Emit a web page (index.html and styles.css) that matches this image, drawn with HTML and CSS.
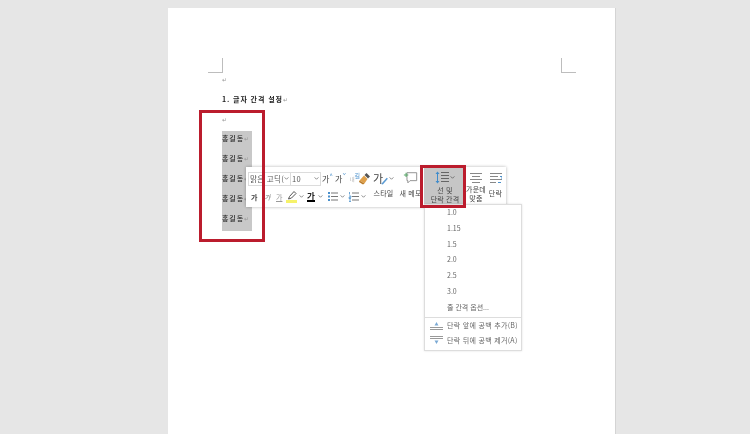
FILE: index.html
```html
<!DOCTYPE html>
<html lang="ko">
<head>
    <meta charset="UTF-8">
    <meta name="viewport" content="width=device-width, initial-scale=1.0">
    <title>줄 간격 설정</title>
    <link rel="stylesheet" href="styles.css">
</head>
<body>
    <div class="page">
        <div class="margin-marks">
            <span class="mark mark-left"></span>
            <span class="mark mark-right"></span>
        </div>

        <div class="doc">
            <p class="line line-empty"><span class="para">↵</span></p>
            <p class="line line-title">1. 글자 간격 설정<span class="para">↵</span></p>
            <p class="line line-empty-2"><span class="para">↵</span></p>
            <div class="selection">
                <p class="name">홍길동<span class="para">↵</span></p>
                <p class="name">홍길동<span class="para">↵</span></p>
                <p class="name">홍길동<span class="para">↵</span></p>
                <p class="name">홍길동<span class="para">↵</span></p>
                <p class="name">홍길동<span class="para">↵</span></p>
            </div>
        </div>

        <!-- mini toolbar -->
        <div class="toolbar">
            <div class="tools">
                <div class="tool-row">
                    <div class="combo combo-font"><span>맑은 고딕(</span>
                        <svg class="chev" width="6" height="4" viewBox="0 0 6 4"><path d="M.5.5 3 3 5.5.5" fill="none" stroke="#666"/></svg>
                    </div>
                    <div class="combo combo-size"><span>10</span>
                        <svg class="chev" width="6" height="4" viewBox="0 0 6 4"><path d="M.5.5 3 3 5.5.5" fill="none" stroke="#666"/></svg>
                    </div>
                    <span class="glyph glyph-grow">가<sup>^</sup></span>
                    <span class="glyph glyph-shrink">가<sup>ˇ</sup></span>
                    <span class="glyph glyph-clear">내<sup>길</sup></span>
                    <svg class="painter" width="13" height="13" viewBox="0 0 13 13">
                        <path d="M8.500 1 12 4.500 10 6.500 6.500 3z" fill="#555"/>
                        <path d="M6 3.500 9.500 7 6.500 11.500 1.500 8.500z" fill="#dfa04a"/>
                        <path d="M1.500 8.500 6.500 11.500 5 12.500 1 10z" fill="#b97a28"/>
                    </svg>
                </div>
                <div class="tool-row tool-row-b">
                    <span class="glyph glyph-bold">가</span>
                    <span class="glyph glyph-italic">가</span>
                    <span class="glyph glyph-under">가</span>
                    <span class="pen">
                        <svg width="13" height="13" viewBox="0 0 13 13">
                            <rect x="1" y="10" width="11" height="3" fill="#f6f26a"/>
                            <path d="M3.500 9 4.500 6.500 9 1.500 11 3.500 6.500 8z" fill="none" stroke="#555"/>
                        </svg>
                        <svg class="chev" width="6" height="4" viewBox="0 0 6 4"><path d="M.5.5 3 3 5.5.5" fill="none" stroke="#666"/></svg>
                    </span>
                    <span class="font-color"><span class="glyph-color">가</span>
                        <svg class="chev" width="6" height="4" viewBox="0 0 6 4"><path d="M.5.5 3 3 5.5.5" fill="none" stroke="#666"/></svg>
                    </span>
                    <span class="list-btn">
                        <svg width="11" height="11" viewBox="0 0 11 11">
                            <path d="M4 2h7M4 5.500h7M4 9h7" stroke="#777"/>
                            <path d="M1 1h2v2H1zM1 4.500h2v2H1zM1 8h2v2H1z" fill="#4a90cc"/>
                        </svg>
                        <svg class="chev" width="6" height="4" viewBox="0 0 6 4"><path d="M.5.5 3 3 5.5.5" fill="none" stroke="#666"/></svg>
                    </span>
                    <span class="list-btn">
                        <svg width="11" height="11" viewBox="0 0 11 11">
                            <path d="M4 2h7M4 5.500h7M4 9h7" stroke="#777"/>
                            <path d="M1.500 1v2.500M1 5h2v1.300H1v1.200h2M1 9h2M1 10.500h2" stroke="#4a90cc" stroke-width=".8" fill="none"/>
                        </svg>
                        <svg class="chev" width="6" height="4" viewBox="0 0 6 4"><path d="M.5.5 3 3 5.5.5" fill="none" stroke="#666"/></svg>
                    </span>
                </div>
            </div>

            <div class="big-btn big-style">
                <span class="big-icon"><span class="style-ga">가</span>
                    <svg class="style-brush" width="9" height="9" viewBox="0 0 8 8"><path d="M1 7 6 1.500 7 2.500 2.500 7.500z" fill="#5a9bd4"/></svg>
                    <svg class="chev" width="6" height="4" viewBox="0 0 6 4"><path d="M.5.5 3 3 5.5.5" fill="none" stroke="#666"/></svg>
                </span>
                <span class="big-label">스타일</span>
            </div>
            <div class="big-btn big-memo">
                <span class="big-icon">
                    <svg width="15" height="14" viewBox="0 0 17 15">
                        <path d="M4.500 1.500h11v9H8L5.500 13v-2.500h-1z" fill="#fff" stroke="#888"/>
                        <path d="M1 4h5M3.500 1.500v5" stroke="#5aa86a" stroke-width="1.200"/>
                    </svg>
                </span>
                <span class="big-label">새 메모</span>
            </div>
            <div class="big-btn big-spacing">
                <span class="big-icon">
                    <svg width="14" height="15" viewBox="0 0 14 15">
                        <path d="M2.500 3v9" stroke="#3f8ccc"/>
                        <path d="M.5 4 2.500 1.500 4.500 4zM.5 11 2.500 13.500 4.500 11z" fill="#3f8ccc"/>
                        <path d="M6 2.500h8M6 5.500h8M6 8.500h8M6 11.500h8" stroke="#666"/>
                    </svg>
                    <svg class="chev" width="6" height="4" viewBox="0 0 6 4"><path d="M.5.5 3 3 5.500.5" fill="none" stroke="#555"/></svg>
                </span>
                <span class="big-label">선 및<br>단락 간격</span>
            </div>
            <div class="big-btn big-center">
                <span class="big-icon">
                    <svg width="12" height="12" viewBox="0 0 12 12">
                        <path d="M0 1.500h12M2 4.500h8M0 7.500h12M2 10.500h8" stroke="#888"/>
                    </svg>
                </span>
                <span class="big-label">가운데<br>맞춤</span>
            </div>
            <div class="big-btn big-para">
                <span class="big-icon">
                    <svg width="12" height="12" viewBox="0 0 12 12">
                        <path d="M0 1.500h12M0 4.500h8M0 7.500h12M0 10.500h6" stroke="#888"/>
                        <path d="M10 4.500h2v3M8 10.500h3" fill="none" stroke="#4a90cc"/>
                    </svg>
                </span>
                <span class="big-label">단락</span>
            </div>
        </div>

        <!-- line spacing menu -->
        <div class="menu">
            <div class="menu-item">1.0</div>
            <div class="menu-item">1.15</div>
            <div class="menu-item">1.5</div>
            <div class="menu-item">2.0</div>
            <div class="menu-item">2.5</div>
            <div class="menu-item">3.0</div>
            <div class="menu-item">줄 간격 옵션...</div>
            <div class="menu-sep"></div>
            <div class="menu-item menu-icon-item">
                <svg width="13" height="11" viewBox="0 0 13 11">
                    <path d="M0 7.500h13M0 9.500h13" stroke="#999"/>
                    <path d="M6.500 2 4.500 5.500h4z" fill="#7aa9d4"/>
                </svg>
                <span>단락 앞에 공백 추가(B)</span>
            </div>
            <div class="menu-item menu-icon-item">
                <svg width="13" height="11" viewBox="0 0 13 11">
                    <path d="M0 1.500h13M0 3.500h13" stroke="#999"/>
                    <path d="M6.500 9 4.500 5.500h4z" fill="#7aa9d4"/>
                </svg>
                <span>단락 뒤에 공백 제거(A)</span>
            </div>
        </div>

        <!-- red annotation boxes -->
        <div class="callout callout-text"></div>
        <div class="callout callout-btn"></div>
    </div>
</body>
</html>
```

FILE: styles.css
```css
body {
    margin: 0;
    height: 434px;
    overflow: hidden;
    background: #e6e6e6;
    font-family: "Noto Sans CJK KR", "Noto Sans", sans-serif;
    color: #333;
}

p {
    margin: 0;
}

.page {
    position: relative;
    width: 448px;
    height: 426px;
    margin: 8px 0 0 168px;
    background: #fff;
    box-sizing: border-box;
    border-right: 1px solid #d4d4d4;
    padding: 50px 39px 0 40px;
    filter: blur(.3px);
}

.margin-marks {
    display: flex;
    justify-content: space-between;
}

.mark {
    width: 14px;
    height: 14px;
    border: 0 solid #bdbdbd;
}

.mark-left {
    border-right-width: 1px;
    border-bottom-width: 1px;
}

.mark-right {
    border-left-width: 1px;
    border-bottom-width: 1px;
}

.doc {
    padding-left: 14px;
    font-size: 7px;
    font-weight: 500;
    letter-spacing: .9px;
    color: #222;
}

.para {
    color: #999;
    font-size: 6px;
    font-weight: 400;
    letter-spacing: 0;
}

.line {
    height: 14px;
    line-height: 14px;
}

.line-empty {
    margin-top: -1px;
}

.line-title {
    margin-top: 6px;
    font-weight: 700;
}

.line-empty-2 {
    margin-top: 6px;
}

.selection {
    width: 30px;
    margin-top: 5px;
    background: #c8c8c8;
}

.name {
    height: 20px;
    line-height: 15px;
    white-space: nowrap;
}

/* mini toolbar */
.toolbar {
    position: absolute;
    left: 78px;
    top: 159px;
    width: 260px;
    height: 40px;
    display: flex;
    background: #fff;
    box-shadow: 0 0 3px rgba(0, 0, 0, .3);
    font-size: 7px;
    color: #444;
}

.tools {
    width: 124px;
    flex: none;
    padding: 3px 0 0 2px;
    box-sizing: border-box;
}

.tool-row {
    display: flex;
    align-items: center;
    height: 17px;
}

.tool-row-b {
    height: 19px;
}

.combo {
    display: flex;
    align-items: center;
    justify-content: space-between;
    height: 14px;
    box-sizing: border-box;
    border: 1px solid #dcdcdc;
    padding: 0 1px 0 1px;
    white-space: nowrap;
    overflow: hidden;
    font-size: 7.5px;
    letter-spacing: .3px;
    color: #555;
}

.combo-font {
    width: 43px;
    flex: none;
}

.combo-size {
    width: 31px;
    flex: none;
    margin-left: -1px;
}

.chev {
    flex: none;
    width: 5px;
    height: 3px;
}

.glyph {
    font-size: 8px;
    white-space: nowrap;
}

.glyph sup {
    font-size: 6px;
    line-height: 0;
    color: #4a90cc;
}

.glyph-grow {
    margin-left: 1px;
    width: 13px;
    flex: none;
}

.glyph-shrink {
    width: 15px;
    flex: none;
}

.glyph-clear {
    width: 8px;
    flex: none;
    font-size: 5px;
    color: #aaa;
}

.painter {
    flex: none;
}

.glyph-bold {
    margin-left: 3px;
    width: 13px;
    flex: none;
    font-weight: 700;
    font-size: 7px;
}

.glyph-italic {
    width: 12px;
    flex: none;
    font-style: italic;
    font-size: 7px;
    color: #777;
}

.glyph-under {
    width: 9px;
    flex: none;
    font-size: 7px;
    color: #999;
    text-decoration: underline;
}

.pen,
.font-color,
.list-btn {
    display: flex;
    align-items: center;
    flex: none;
}

.pen {
    width: 22px;
}

.pen .chev {
    margin-left: .5px;
}

.font-color {
    width: 20px;
    gap: 3px;
}

.glyph-color {
    display: block;
    font-weight: 700;
    font-size: 8.5px;
    line-height: 9px;
    color: #222;
    border-bottom: 2px solid #000;
}

.list-btn {
    width: 21px;
    gap: 2px;
}

.big-btn {
    display: flex;
    flex-direction: column;
    align-items: center;
    flex: none;
    padding-top: 3px;
    box-sizing: border-box;
    height: 100%;
}

.big-icon {
    display: flex;
    align-items: center;
    justify-content: center;
    height: 16px;
}

.big-label {
    margin-top: 3px;
    font-size: 7px;
    line-height: 9px;
    text-align: center;
    white-space: nowrap;
    letter-spacing: .2px;
    color: #444;
}

.big-style {
    width: 27px;
}

.style-ga {
    font-size: 11px;
    line-height: 14px;
    color: #444;
}

.style-brush {
    margin-left: -3px;
    margin-top: 5px;
}

.big-memo {
    width: 27px;
}

.big-spacing {
    width: 42px;
    background: #c6c6c6;
}

.big-spacing .big-label {
    margin-top: 1px;
}

.big-spacing .big-icon {
    gap: 1px;
    height: 15px;
}

.big-center {
    width: 19px;
}

.big-center .big-label {
    margin-top: -1px;
    margin-left: 1px;
}

.big-para {
    width: 21px;
}

/* line spacing menu */
.menu {
    position: absolute;
    left: 256px;
    top: 196px;
    width: 98px;
    height: 147px;
    box-sizing: border-box;
    background: #fff;
    border: 1px solid #ddd;
    box-shadow: 0 0 2px rgba(0, 0, 0, .12);
    font-size: 7px;
    color: #666;
}

.menu-item {
    height: 15.8px;
    line-height: 15.8px;
    padding-left: 22px;
    white-space: nowrap;
}

.menu-sep {
    height: 1px;
    margin: 1px 0 0;
    background: #ddd;
}

.menu-icon-item {
    display: flex;
    align-items: center;
    gap: 4px;
    padding-left: 5px;
    height: 15px;
    line-height: 15px;
    letter-spacing: .3px;
}

/* red annotation boxes */
.callout {
    position: absolute;
    border: 3px solid #bb1c2d;
    box-sizing: border-box;
}

.callout-text {
    left: 31px;
    top: 102px;
    width: 66px;
    height: 132px;
}

.callout-btn {
    left: 252px;
    top: 157px;
    width: 46px;
    height: 43px;
}
```
